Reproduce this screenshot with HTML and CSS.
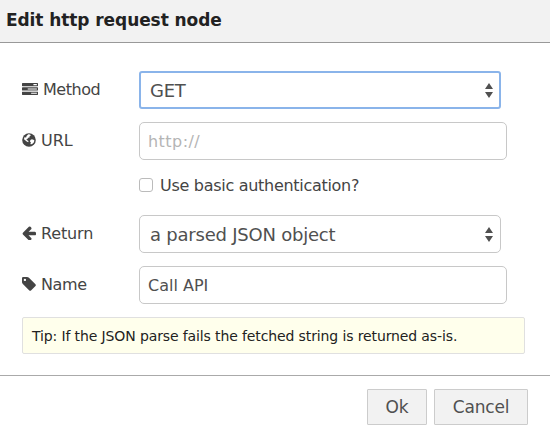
FILE: index.html
```html
<!DOCTYPE html>
<html lang="en">
<head>
<meta charset="utf-8">
<title>Edit http request node</title>
<link rel="stylesheet" href="styles.css">
</head>
<body>
<main class="dialog">
  <header class="title"><h1>Edit http request node</h1></header>
  <form class="form">
    <div class="row">
      <div class="label"><svg class="icon wide" viewBox="0 128 1792 1536" preserveAspectRatio="none"><path fill-rule="evenodd" d="M1024 1408h640v-128h-640v128zm-384-512h1024v-128h-1024v128zm640-512h384v-128h-384v128zm512 832v256q0 26-19 45t-45 19h-1664q-26 0-45-19t-19-45v-256q0-26 19-45t45-19h1664q26 0 45 19t19 45zm0-512v256q0 26-19 45t-45 19h-1664q-26 0-45-19t-19-45v-256q0-26 19-45t45-19h1664q26 0 45 19t19 45zm0-512v256q0 26-19 45t-45 19h-1664q-26 0-45-19t-19-45v-256q0-26 19-45t45-19h1664q26 0 45 19t19 45z"/></svg><span class="method">Method</span></div>
      <div class="select focused"><span class="get">GET</span><svg class="arrows" viewBox="0 0 8 15"><path d="M4 0l4 6H0zM0 9h8l-4 6z"/></svg></div>
    </div>
    <div class="row">
      <div class="label"><svg class="icon" viewBox="0 0 14 14"><circle cx="7" cy="7" r="6.8"/><path class="land" d="M6.300 1.200l1.800.2.700 1.200-1.400.9.200 1-1.500.3-.7 1.200-1.100.3.900 1 1.300.8-.3 1.200-1.500-.7L3.200 7.200 2 6.300l.4-2 1.700.3.500-1.700zM8.400 7l1.500-.8 1.600.5.900.7-.6 2-1.300 1.400-1.600.8-.5-1.300.6-1.100-1.100-.8z"/></svg><span class="url">URL</span></div>
      <div class="input placeholder"><span class="http">http://</span></div>
    </div>
    <div class="check"><span class="box"></span><span class="auth">Use basic authentication?</span></div>
    <div class="row">
      <div class="label"><svg class="icon" viewBox="128 128 1536 1536"><path d="M1664 896v128q0 53-32.500 90.500t-84.500 37.500h-704l293 294q38 36 38 90t-38 90l-75 76q-37 37-90 37-52 0-91-37l-651-652q-37-37-37-90 0-52 37-91l651-650q38-38 91-38 52 0 90 38l75 74q38 38 38 91t-38 91l-293 293h704q52 0 84.500 37.500t32.500 90.500z"/></svg><span class="return">Return</span></div>
      <div class="select"><span class="json">a parsed JSON object</span><svg class="arrows" viewBox="0 0 8 15"><path d="M4 0l4 6H0zM0 9h8l-4 6z"/></svg></div>
    </div>
    <div class="row">
      <div class="label"><svg class="icon" viewBox="128 128 1536 1536"><path d="M576 448q0-53-37.500-90.500t-90.500-37.500-90.500 37.500-37.500 90.500 37.500 90.500 90.500 37.500 90.500-37.500 37.500-90.500zm1067 576q0 53-37 90l-491 492q-39 37-91 37-53 0-90-37l-715-716q-38-37-64.500-101t-26.500-117v-416q0-52 38-90t90-38h416q53 0 117 26.500t102 64.500l715 714q37 39 37 91z"/></svg><span class="name">Name</span></div>
      <div class="input"><span class="api">Call API</span></div>
    </div>
    <p class="tip"><span>Tip: If the JSON parse fails the fetched string is returned as-is.</span></p>
  </form>
  <footer class="footer"><button class="ok" type="button">Ok</button><button class="cancel" type="button">Cancel</button></footer>
</main>
</body>
</html>
```

FILE: styles.css
```css
* { box-sizing: border-box; }
body { margin: 0; background: #fff; color: #444; font-family: Verdana, "DejaVu Sans", sans-serif; font-size: 16px; }
.dialog { width: 550px; height: 439px; overflow: hidden; }
.title { height: 43px; padding: 9px 6px 0; background: #f2f2f2; border-bottom: 1px solid #999; }
h1 { margin: 0; font-size: 17px; line-height: 22px; letter-spacing: -0.08px; color: #222; white-space: nowrap; }
.form { height: 332px; padding: 28px 25px 0 22px; }
.row { display: flex; height: 38px; margin-bottom: 13px; }
.label { display: flex; align-items: center; width: 117px; padding-bottom: 2px; font-size: 16px; white-space: nowrap; }
.icon { width: 14px; height: 14px; margin-right: 5px; fill: #444; flex: none; }
.wide { width: 16px; height: 13px; }
.land { fill: #fff; }
.select, .input { display: flex; align-items: center; height: 38px; border: 1px solid #c8c8c8; border-radius: 5px; background: #fff; white-space: nowrap; color: #505050; }
.select { width: 362px; padding: 0 7px 0 10px; justify-content: space-between; font-size: 18px; }
.focused { border: 2px solid #8ab4ea; border-radius: 3px; padding: 0 6px 0 9px; }
.input { width: 368px; padding: 0 8px; font-size: 16px; }
.placeholder { color: #b5b5b5; }
.method { letter-spacing: -0.45px; }
.return { letter-spacing: -0.15px; }
.name { letter-spacing: -0.4px; }
.get { letter-spacing: -0.3px; }
.http { letter-spacing: 0.45px; }
.auth { letter-spacing: -0.29px; }
.json { letter-spacing: -0.22px; }
.arrows { width: 8px; height: 15px; fill: #505050; }
.check { display: flex; align-items: center; height: 14px; margin: 18px 0 23px 117px; white-space: nowrap; }
.box { width: 14px; height: 14px; margin-right: 7px; border: 1px solid #bbb; border-radius: 3px; }
.tip { display: flex; align-items: center; width: 503px; height: 37px; margin: 0; padding: 0 9px; border: 1px solid #e0e0e0; border-radius: 2px; background: #ffffec; color: #222; font-size: 14px; letter-spacing: -0.12px; white-space: nowrap; }
.footer { display: flex; justify-content: flex-end; gap: 7px; height: 64px; padding: 13px 22px 0 0; border-top: 1px solid #aaa; }
button { height: 36px; padding: 0; border: 1px solid #ccc; border-radius: 1px; background: #f2f2f2; color: #505050; font: 17px Verdana, "DejaVu Sans", sans-serif; }
.ok { width: 60px; }
.cancel { width: 94px; letter-spacing: -0.2px; }
```
